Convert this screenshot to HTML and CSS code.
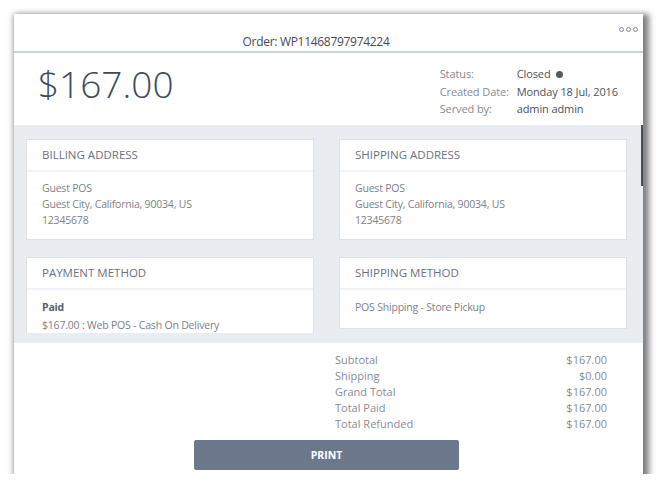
FILE: index.html
```html
<!DOCTYPE html>
<html>
<head>
<meta charset="utf-8">
<link rel="stylesheet" href="styles.css">
</head>
<body>
<div class="panel">
  <div class="header">
    <span class="order">Order: WP11468797974224</span>
    <span class="more"><i></i><i></i><i></i></span>
  </div>
  <div class="summary">
    <div class="amount">$167.00</div>
    <div class="meta">
      <span class="lbl">Status:</span><span class="val">Closed <b class="dot"></b></span>
      <span class="lbl">Created Date:</span><span class="val">Monday 18 Jul, 2016</span>
      <span class="lbl">Served by:</span><span class="val">admin admin</span>
    </div>
  </div>
  <div class="details">
    <div class="scroll">
      <div class="cards">
        <div class="card">
          <div class="card-head">BILLING ADDRESS</div>
          <div class="card-body">Guest POS<br>Guest City, California, 90034, US<br>12345678</div>
        </div>
        <div class="card">
          <div class="card-head">SHIPPING ADDRESS</div>
          <div class="card-body">Guest POS<br>Guest City, California, 90034, US<br>12345678</div>
        </div>
        <div class="card">
          <div class="card-head">PAYMENT METHOD</div>
          <div class="card-body pay"><strong>Paid</strong><br>$167.00 : Web POS - Cash On Delivery<br>&nbsp;</div>
        </div>
        <div class="card">
          <div class="card-head">SHIPPING METHOD</div>
          <div class="card-body ship">POS Shipping - Store Pickup</div>
        </div>
      </div>
    </div>
    <div class="thumb"></div>
  </div>
  <div class="footer">
    <div class="totals">
      <span>Subtotal</span><span>$167.00</span>
      <span>Shipping</span><span>$0.00</span>
      <span>Grand Total</span><span>$167.00</span>
      <span>Total Paid</span><span>$167.00</span>
      <span>Total Refunded</span><span>$167.00</span>
    </div>
    <button class="print">PRINT</button>
  </div>
</div>
</body>
</html>
```
FILE: styles.css
```css
html, body {
  margin: 0;
  padding: 0;
  background: #ffffff;
}
body {
  font-family: "Open Sans", "Liberation Sans", sans-serif;
  padding: 14px 0 0 14px;
}
.panel {
  width: 629px;
  height: 460px;
  background: #ffffff;
  box-shadow: 3px 3px 6px 3px rgba(0, 0, 0, 0.5);
  display: flex;
  flex-direction: column;
}
.header {
  position: relative;
  height: 37px;
  border-bottom: 2px solid #cdd2d8;
  box-sizing: content-box;
  display: flex;
  align-items: flex-end;
  justify-content: center;
  padding-right: 25px;
}
.order {
  font-size: 12px;
  letter-spacing: -0.3px;
  color: #444b55;
  line-height: 18px;
}
.more {
  position: absolute;
  right: 5px;
  top: 13px;
  display: flex;
  gap: 2px;
}
.more i {
  width: 3px;
  height: 3px;
  border: 1px solid #7c8aa0;
  border-radius: 50%;
}
.summary {
  height: 72px;
  display: flex;
  justify-content: space-between;
  padding: 0 25px 0 24px;
}
.amount {
  font-size: 37px;
  font-weight: 300;
  color: #3e4a5c;
  line-height: 36px;
  padding-top: 13px;
}
.meta {
  display: grid;
  grid-template-columns: 77px auto;
  font-size: 11px;
  letter-spacing: -0.1px;
  line-height: 17.5px;
  padding-top: 12px;
  align-content: start;
}
.lbl {
  color: #858a92;
}
.val {
  color: #4c525b;
}
.dot {
  display: inline-block;
  width: 7px;
  height: 7px;
  border-radius: 50%;
  background: #555a60;
  margin-left: 3px;
  vertical-align: 0;
}
.details {
  position: relative;
  background: #e9ecf0;
  padding: 14px 14px 10px 12px;
}
.scroll {
  height: 194px;
  overflow: hidden;
}
.cards {
  display: grid;
  grid-template-columns: 288px 288px;
  column-gap: 25px;
  row-gap: 17px;
  align-items: start;
}
.card {
  background: #ffffff;
  border: 1px solid #dde1e6;
  box-sizing: border-box;
}
.card-head {
  height: 30px;
  line-height: 30px;
  padding-left: 15px;
  font-size: 11.5px;
  color: #6b727d;
  border-bottom: 2px solid #f0f2f5;
}
.card-body {
  padding: 8px 15px 11px;
  font-size: 10.5px;
  letter-spacing: -0.2px;
  line-height: 16px;
  color: #7d8188;
}
.card-body.pay {
  line-height: 18px;
  padding-top: 8px;
}
.card-body strong {
  color: #5a616b;
  font-weight: 700;
}
.card-body.ship {
  padding-top: 8px;
  padding-bottom: 12px;
  line-height: 18px;
}
.thumb {
  position: absolute;
  right: 0;
  top: 0;
  width: 2px;
  height: 61px;
  background: #4a4d52;
}
.footer {
  padding-top: 9px;
}
.totals {
  display: grid;
  grid-template-columns: 1fr auto;
  width: 272px;
  margin-left: 321px;
  font-size: 11px;
  line-height: 16px;
  color: #878c94;
}
.totals span:nth-child(2n) {
  text-align: right;
}
.print {
  display: block;
  margin: 8px 0 0 180px;
  width: 265px;
  height: 30px;
  border: none;
  border-radius: 2px;
  background: #6c798d;
  color: #ffffff;
  font-family: "Open Sans", "Liberation Sans", sans-serif;
  font-size: 10.5px;
  font-weight: 700;
  padding: 0;
}
```
